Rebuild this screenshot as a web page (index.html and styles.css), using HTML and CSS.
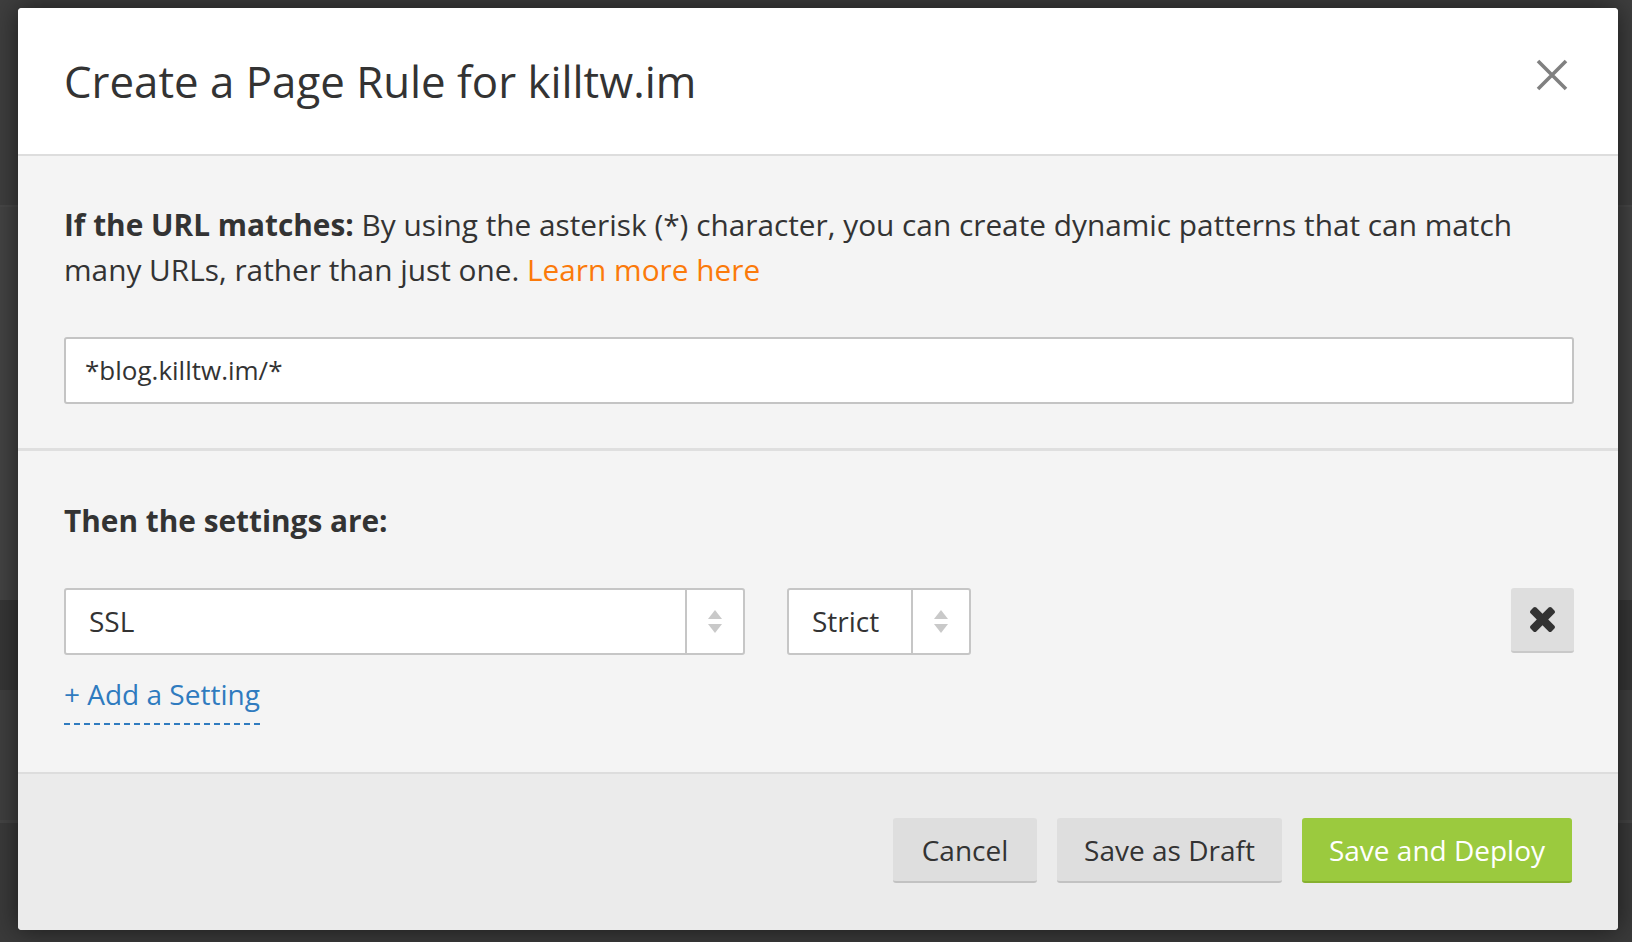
FILE: index.html
```html
<!DOCTYPE html>
<html lang="en">
<head>
<meta charset="utf-8">
<title>Create a Page Rule</title>
<link rel="stylesheet" href="styles.css">
</head>
<body>
<div class="modal">
  <header class="modal-header">
    <h1 class="modal-title">Create a Page Rule for killtw.im</h1>
    <button class="close-btn" aria-label="Close">
      <svg viewBox="0 0 32 32" width="32" height="32"><path d="M2 2 L30 30 M30 2 L2 30" stroke="#808080" stroke-width="3.6" fill="none"/></svg>
    </button>
  </header>

  <section class="panel panel-url">
    <p class="intro"><strong>If the URL matches:</strong> By using the asterisk (*) character, you can create dynamic patterns that can match many URLs, rather than just one. <a class="learn" href="#">Learn more here</a></p>
    <div class="url-input">*blog.killtw.im/*</div>
  </section>

  <section class="panel panel-settings">
    <h2 class="settings-title">Then the settings are:</h2>
    <div class="setting-row">
      <div class="select select-wide">
        <span class="select-value">SSL</span>
        <span class="select-arrows"><i class="up"></i><i class="down"></i></span>
      </div>
      <div class="select select-narrow">
        <span class="select-value">Strict</span>
        <span class="select-arrows"><i class="up"></i><i class="down"></i></span>
      </div>
      <button class="remove-btn" aria-label="Remove">
        <svg viewBox="302 366 1188 1188" width="25" height="25"><path fill="#333" d="M1490 1322q0 40-28 68l-136 136q-28 28-68 28t-68-28l-294-294-294 294q-28 28-68 28t-68-28l-136-136q-28-28-28-68t28-68l294-294-294-294q-28-28-28-68t28-68l136-136q28-28 68-28t68 28l294 294 294-294q28-28 68-28t68 28l136 136q28 28 28 68t-28 68l-294 294 294 294q28 28 28 68z"/></svg>
      </button>
    </div>
    <a class="add-setting" href="#">+ Add a Setting</a>
  </section>

  <footer class="modal-footer">
    <button class="btn btn-gray btn-cancel">Cancel</button>
    <button class="btn btn-gray btn-draft">Save as Draft</button>
    <button class="btn btn-green btn-deploy">Save and Deploy</button>
  </footer>
</div>
</body>
</html>
```

FILE: styles.css
```css
* { box-sizing: border-box; }

html, body { height: 100%; }

body {
  margin: 0;
  padding: 8px 0 0 18px;
  font-family: "Open Sans", "Liberation Sans", sans-serif;
  color: #333;
  overflow: hidden;
  background:
    linear-gradient(to bottom,
      #3e3e3e 0, #3e3e3e 205px,
      #474747 205px, #474747 207px,
      #434343 207px, #434343 600px,
      #363636 600px, #363636 690px,
      #3f3f3f 690px, #3f3f3f 820px,
      #444 820px, #444 823px,
      #3a3a3a 823px);
}

.modal {
  width: 1600px;
  height: 922px;
  background: #f4f4f4;
  border-radius: 4px;
  box-shadow: 0 0 26px rgba(0, 0, 0, 0.55);
  display: flex;
  flex-direction: column;
  overflow: hidden;
}

.modal-header {
  height: 148px;
  flex: none;
  background: #fff;
  border-bottom: 2px solid #dddddd;
  display: flex;
  align-items: center;
  justify-content: space-between;
  padding: 0 50px 0 46px;
}

.modal-title {
  margin: 0;
  font-size: 43.8px;
  font-weight: 400;
  line-height: 1;
  color: #333;
  padding-top: 1px;
}

.close-btn {
  border: 0;
  background: none;
  padding: 0;
  width: 32px;
  height: 32px;
  margin-top: -12px;
  cursor: pointer;
}
.close-btn svg { display: block; }

.panel {
  padding-left: 46px;
  padding-right: 44px;
}

.panel-url {
  padding-top: 46px;
  padding-bottom: 44px;
  border-bottom: 3px solid #dfdfdf;
}

.intro {
  margin: 0 0 45px;
  font-size: 29.8px;
  line-height: 45px;
  color: #333;
}
.intro strong { font-weight: 700; }

.learn {
  color: #fb7a0a;
  text-decoration: none;
}

.url-input {
  height: 67px;
  background: #fff;
  border: 2px solid #c4c4c4;
  border-radius: 3px;
  padding: 0 19px;
  font-size: 26px;
  line-height: 63px;
  color: #333;
}

.panel-settings {
  padding-top: 47px;
  padding-bottom: 47px;
  flex: none;
}

.settings-title {
  margin: 0;
  font-size: 29.8px;
  font-weight: 700;
  line-height: 45px;
  color: #333;
}

.setting-row {
  margin-top: 45px;
  display: flex;
  align-items: flex-start;
  gap: 42px;
}

.select {
  height: 67px;
  background: #fff;
  border: 2px solid #c6c6c6;
  border-radius: 3px;
  display: flex;
  align-items: stretch;
}

.select-wide { width: 681px; }
.select-narrow { width: 184px; }

.select-value {
  flex: 1;
  padding-left: 23px;
  font-size: 28px;
  line-height: 62px;
  color: #333;
}

.select-arrows {
  width: 58px;
  flex: none;
  border-left: 2px solid #c6c6c6;
  display: flex;
  flex-direction: column;
  align-items: center;
  justify-content: center;
  gap: 5px;
}

.select-arrows i {
  display: block;
  width: 0;
  height: 0;
  border-left: 7px solid transparent;
  border-right: 7px solid transparent;
}
.select-arrows .up { border-bottom: 9px solid #c9c9c9; }
.select-arrows .down { border-top: 9px solid #c9c9c9; }

.remove-btn {
  margin-left: auto;
  width: 63px;
  height: 65px;
  border: 0;
  border-bottom: 2px solid #c9c9c9;
  border-radius: 3px;
  background: #dedede;
  display: flex;
  align-items: center;
  justify-content: center;
  padding: 0;
  cursor: pointer;
}
.remove-btn svg { display: block; }

.add-setting {
  display: inline-block;
  margin-top: 17px;
  font-size: 28px;
  line-height: 45px;
  color: #2f7bbf;
  text-decoration: none;
  padding-bottom: 6px;
  border-bottom: 2px dashed #2f7bbf;
}

.modal-footer {
  flex: 1;
  background: #ebebeb;
  border-top: 2px solid #dddddd;
  display: flex;
  justify-content: flex-end;
  align-items: flex-start;
  gap: 20px;
  padding: 44px 46px 0 46px;
}

.btn {
  height: 65px;
  border: 0;
  border-radius: 3px;
  padding: 1px 0 0;
  font-family: "Open Sans", "Liberation Sans", sans-serif;
  font-size: 28px;
  line-height: 62px;
  cursor: pointer;
  text-align: center;
}

.btn-gray {
  background: #dedede;
  border-bottom: 2px solid #c2c2c2;
  color: #333;
}

.btn-green {
  background: #9bca3e;
  border-bottom: 2px solid #86b02f;
  color: #fff;
}

.btn-cancel { width: 144px; }
.btn-draft { width: 225px; }
.btn-deploy { width: 270px; }
```
